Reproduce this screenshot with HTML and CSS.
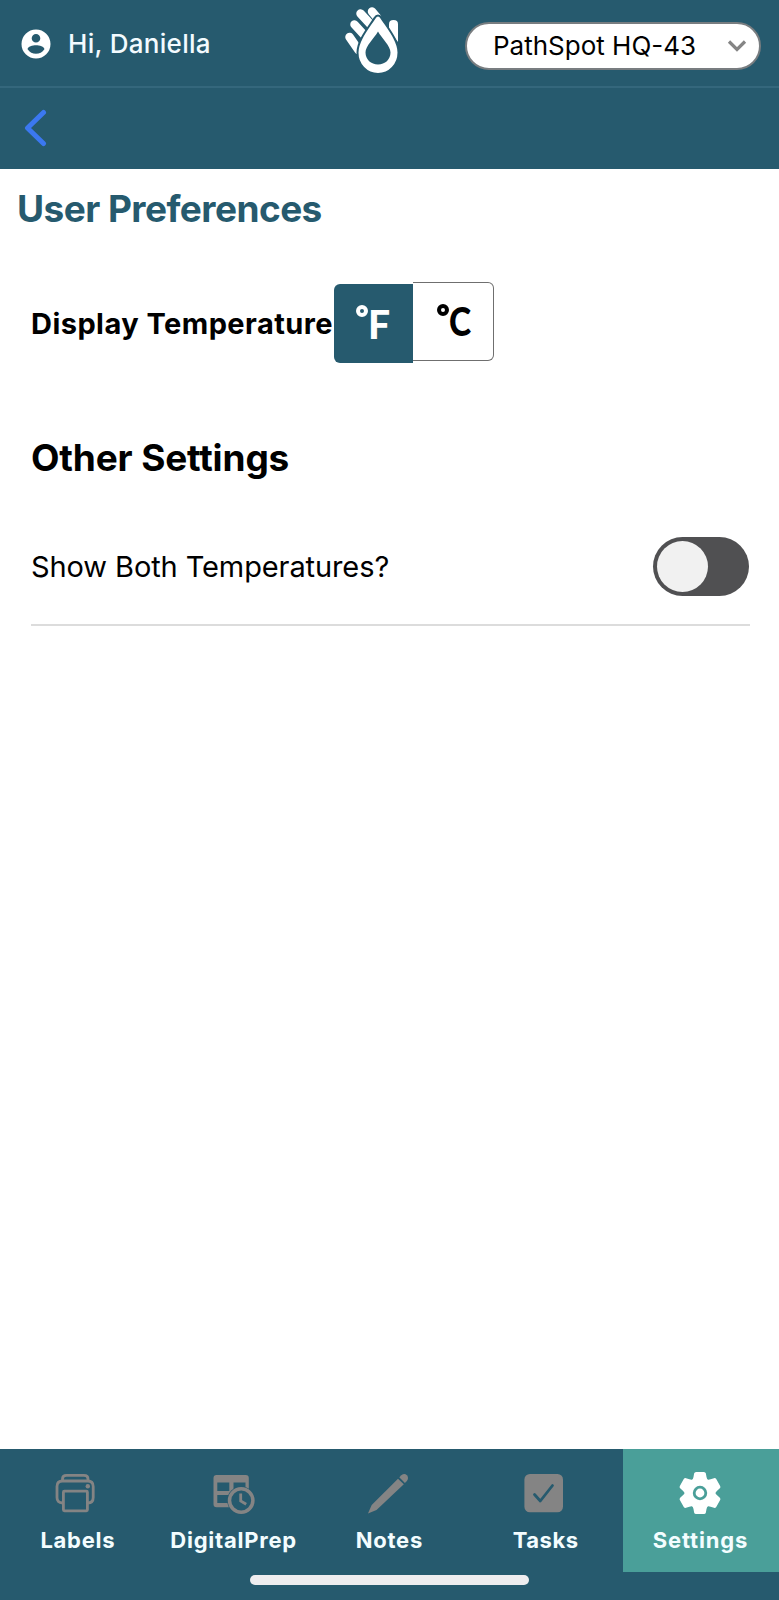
FILE: index.html
```
<!DOCTYPE html>
<html lang="en">
	<head>
		<meta charset="UTF-8">
		<title>User Preferences</title>
		<link rel="stylesheet" href="styles.css">
	</head>
	<body>
		<div id="app">
			<header class="top">
				<div class="user">
					<svg class="user_icon" viewBox="0 0 30 30">
						<path fill="#fff" fill-rule="evenodd" d="M15 0.5a14.5 14.5 0 1 0 0 29a14.5 14.5 0 1 0 0-29zM15 5a4.3 4.3 0 1 1 0 8.600a4.300 4.300 0 1 1 0-8.600zM6.600 20.200c0-2.600 5-3.900 8.400-3.900s8.400 1.300 8.400 3.900c-2 3-5 4.600-8.400 4.600s-6.400-1.600-8.400-4.600z"/>
					</svg>
					<span class="hello">Hi, Daniella</span>
				</div>
				<svg class="logo" viewBox="0 0 60 74">
					<g stroke="#fff" stroke-width="8.500" stroke-linecap="round">
						<path d="M9.500 37l9 13"/>
						<path d="M14.500 24.500l11 12"/>
						<path d="M20.500 13.500l12 13"/>
						<path d="M32 11.500l5 6"/>
					</g>
					<path fill="#fff" d="M49 24q0-4 4.500-4t4.500 4v18l-9-12z"/>
					<path fill="#fff" stroke="#265a6e" stroke-width="2" d="M38 15.500c1.500 0 2.500 1 3.500 2.600c6 9.500 17 22.400 17 34.400c0 12-9 21.500-20.500 21.500s-20.500-9.500-20.500-21.500c0-12 11-24.900 17-34.400c1-1.600 2-2.600 3.500-2.600z"/>
					<path fill="#265a6e" d="M38 31.500c4 7 12.500 14.500 12.500 21c0 7-5.500 12-12.500 12s-12.500-5-12.500-12c0-6.500 8.500-14 12.500-21z"/>
				</svg>
				<div class="location">
					<span class="location_name">PathSpot HQ-43</span>
					<svg class="location_arrow" viewBox="0 0 20 14">
						<path d="M2 2.500l8 8l8-8" fill="none" stroke="#858585" stroke-width="3.200"/>
					</svg>
				</div>
			</header>
			<div class="back">
				<svg class="back_icon" viewBox="0 0 24 40">
					<path d="M19.500 4.500L3.500 20l16 15.500" fill="none" stroke="#3b78f0" stroke-width="5" stroke-linecap="round" stroke-linejoin="round"/>
				</svg>
			</div>
			<main>
				<h1>User Preferences</h1>
				<div class="temp">
					<span class="temp_name">Display Temperature</span>
					<div class="btn btn_f"><i class="deg"></i><span>F</span></div>
					<div class="btn btn_c"><i class="deg"></i><span>C</span></div>
				</div>
				<h2>Other Settings</h2>
				<div class="setting">
					<span class="setting_name">Show Both Temperatures?</span>
					<div class="toggle"><div class="knob"></div></div>
				</div>
			</main>
			<nav>
				<div class="tab">
					<svg viewBox="0 0 44 44" fill="none" stroke="#848484" stroke-width="2.800">
						<path d="M8.500 9.500V8q0-3.600 4-3.600h17.500q4 0 4 3.600v1.500"/>
						<path d="M8.500 32q-5.500 0-5.500-5.500V15.500q0-5.500 5.500-5.500h25.200q5.500 0 5.500 5.500v11q0 5.500-5.500 5.500"/>
						<rect x="9.400" y="20.200" width="24" height="19.600" rx="1"/>
						<circle cx="33.800" cy="15.200" r="2.200" fill="#848484" stroke="none"/>
					</svg>
					<span>Labels</span>
				</div>
				<div class="tab">
					<svg viewBox="0 0 44 44" overflow="visible">
						<path fill="#848484" fill-rule="evenodd" d="M6.500 4h29.300q3 0 3 3v29.300H6.500q-3 0-3-3V7q0-3 3-3zM7.300 11.500v8.500h12v-8.500zM23.500 11.500v8.500h12v-8.500zM7.300 24v8h12v-8z"/>
						<path fill="#265a6e" d="M20 36h20v4H20z"/>
						<circle cx="31.200" cy="29.500" r="14" fill="#265a6e"/>
						<circle cx="31.200" cy="29.500" r="11.700" fill="none" stroke="#848484" stroke-width="3.500"/>
						<path d="M30.700 22.500v7.500l5.500 3.300" fill="none" stroke="#848484" stroke-width="2.800"/>
					</svg>
					<span>DigitalPrep</span>
				</div>
				<div class="tab">
					<svg viewBox="0 0 44 44" fill="#848484">
						<path d="M32 7.700l5.800 5.600L10.500 39L2 42.500l3.700-8.500z"/>
						<path d="M33.300 6.300l2-2q3.200-2.400 5.600 0q2.200 2.600 0 5.600l-2 2z"/>
					</svg>
					<span>Notes</span>
				</div>
				<div class="tab">
					<svg viewBox="0 0 44 44">
						<rect x="2.400" y="3" width="38.600" height="38.300" rx="5.500" fill="#848484"/>
						<path d="M12.500 23.500l5.800 6.500L30.500 14.500" fill="none" stroke="#265a6e" stroke-width="2.800" stroke-linecap="round" stroke-linejoin="round"/>
					</svg>
					<span class="t_tasks">Tasks</span>
				</div>
				<div class="tab on">
					<svg viewBox="0 0 44 44">
						<g fill="#fff">
							<circle cx="22" cy="22" r="15"/>
							<path id="tooth" d="M13.500 9.500q1.600-1 2-3.500l.6-3.500q.4-1.500 2-1.500h7.800q1.600 0 2 1.500l.6 3.500q.4 2.500 2 3.500L22 22z"/>
							<use href="#tooth" transform="rotate(60 22 22)"/>
							<use href="#tooth" transform="rotate(120 22 22)"/>
							<use href="#tooth" transform="rotate(180 22 22)"/>
							<use href="#tooth" transform="rotate(240 22 22)"/>
							<use href="#tooth" transform="rotate(300 22 22)"/>
						</g>
						<circle cx="22" cy="22" r="5.800" fill="none" stroke="#4a9f99" stroke-width="2.800"/>
					</svg>
					<span class="t_settings">Settings</span>
				</div>
			</nav>
			<footer><div class="home"></div></footer>
		</div>
	</body>
</html>
```
FILE: styles.css
```
*{
	padding: 0;
	margin: 0;
	box-sizing: border-box;
}
body{
	background: #fff;
	font-family: Inter, "Liberation Sans", sans-serif;
	color: #000;
}
#app{
	display: flex;
	flex-direction: column;
	width: 779px;
	height: 1600px;
	overflow: hidden;
}
.top{
	display: grid;
	grid-template-columns: 340px 60px 1fr;
	height: 88px;
	background: #265a6e;
	border-bottom: 2px solid #34677c;
}
.user{
	display: flex;
	align-items: center;
	height: 87px;
	padding-left: 21px;
}
.user_icon{
	width: 30px;
	height: 30px;
}
.hello{
	margin-left: 17px;
	font-size: 26px;
	font-weight: 500;
	letter-spacing: 0.3px;
	color: #f3fbff;
	white-space: nowrap;
}
.logo{
	width: 60px;
	height: 74px;
}
.location{
	display: flex;
	justify-content: space-between;
	align-items: center;
	width: 296px;
	height: 48px;
	margin: 22px 0 0 65px;
	padding: 0 12px 0 26px;
	border: 2px solid #787d80;
	border-radius: 24px;
	background: #fff;
}
.location_name{
	margin-bottom: 2px;
	font-size: 26px;
	white-space: nowrap;
}
.location_arrow{
	width: 20px;
	height: 14px;
}
.back{
	height: 81px;
	padding: 20px 0 0 24px;
	background: #265a6e;
}
.back_icon{
	display: block;
	width: 24px;
	height: 40px;
}
main{
	flex: 1;
}
h1{
	margin: 18px 0 0 17px;
	font-size: 37px;
	font-weight: 700;
	letter-spacing: -0.55px;
	line-height: 44px;
	color: #265a6e;
}
.temp{
	display: flex;
	height: 81px;
	margin: 51px 0 0 31px;
}
.temp_name{
	width: 303px;
	font-size: 29px;
	font-weight: 700;
	letter-spacing: 0.45px;
	line-height: 83px;
	white-space: nowrap;
}
.btn{
	display: flex;
	height: 79px;
	font-family: Lato, sans-serif;
	font-size: 39px;
	font-weight: 900;
	line-height: 77px;
}
.btn_f{
	width: 79px;
	margin-top: 2px;
	padding-left: 22px;
	border-radius: 6px 0 0 6px;
	background: #265a6e;
	color: #fff;
	line-height: 80px;
}
.btn_c{
	width: 81px;
	padding-left: 24px;
	border: 1px solid #6f6f6f;
	border-left: 0;
	border-radius: 0 6px 6px 0;
}
.btn_c span{
	transform: scaleX(0.86);
	transform-origin: left;
}
.deg{
	width: 12px;
	height: 12px;
	margin-top: 21px;
	border: 4px solid;
	border-radius: 50%;
}
h2{
	margin: 72px 0 0 31px;
	font-size: 37px;
	font-weight: 700;
	letter-spacing: -0.15px;
	line-height: 46px;
}
.setting{
	display: flex;
	justify-content: space-between;
	align-items: center;
	width: 719px;
	height: 117px;
	margin: 28px 0 0 31px;
	border-bottom: 2px solid #dcdcdc;
}
.setting_name{
	margin-bottom: 1px;
	font-size: 29px;
	letter-spacing: -0.1px;
	white-space: nowrap;
}
.toggle{
	width: 96px;
	height: 59px;
	margin-right: 1px;
	padding: 4px;
	border-radius: 30px;
	background: #505052;
}
.knob{
	width: 51px;
	height: 51px;
	border-radius: 50%;
	background: #f1f1f1;
}
nav{
	display: grid;
	grid-template-columns: repeat(4, 1fr) 156px;
	height: 123px;
	background: #265a6e;
}
.tab{
	display: flex;
	flex-direction: column;
	align-items: center;
	padding-top: 22px;
	font-size: 22px;
	font-weight: 700;
	letter-spacing: 0.75px;
	color: #f3fdff;
}
.tab svg{
	width: 44px;
	height: 44px;
	margin-left: -3px;
}
.tab span{
	margin-top: 12px;
	line-height: 26px;
}
.tab .t_tasks{
	margin-left: 1px;
	letter-spacing: 0.5px;
}
.tab .t_settings{
	margin-left: -1px;
	letter-spacing: 0.85px;
}
.on{
	background: #4a9f99;
}
footer{
	height: 28px;
	padding-top: 3px;
	background: #265a6e;
}
.home{
	width: 279px;
	height: 10px;
	margin-left: 250px;
	border-radius: 5px;
	background: #eeedef;
}
```
